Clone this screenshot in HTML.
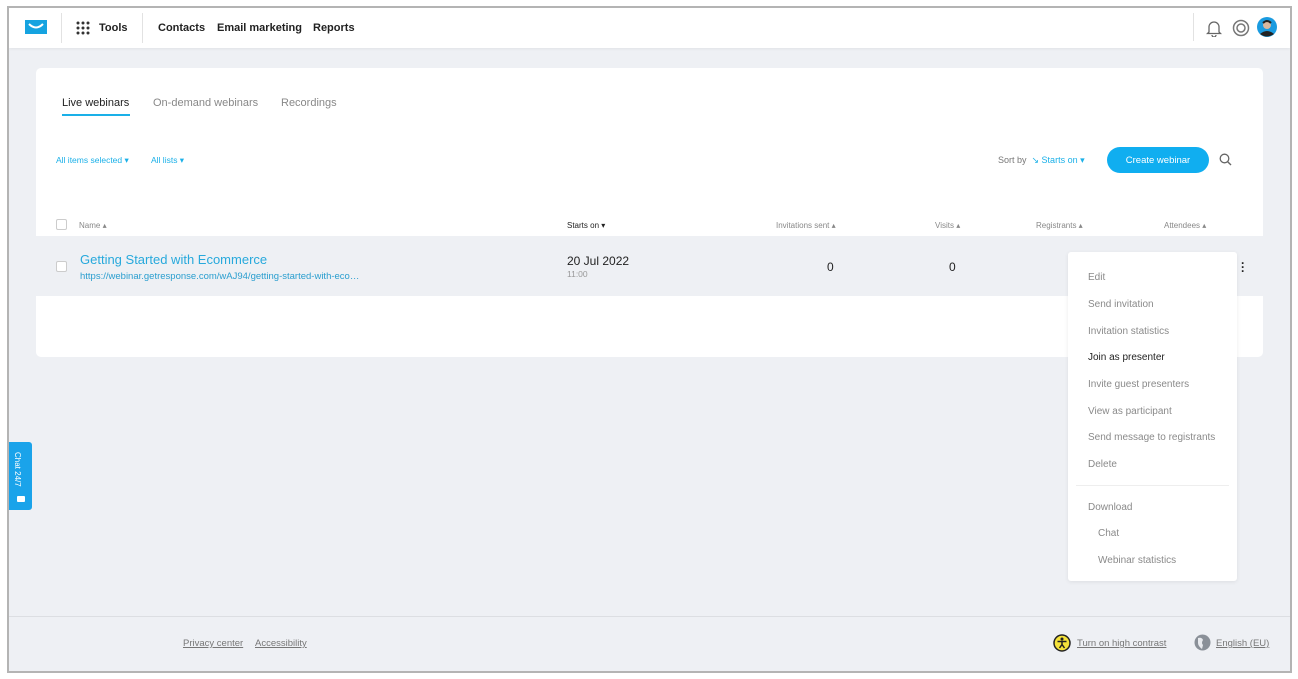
<!DOCTYPE html>
<html><head><meta charset="utf-8"><style>
*{margin:0;padding:0;box-sizing:border-box}
body{width:1298px;height:679px;background:#fff;font-family:"Liberation Sans",sans-serif;position:relative;overflow:hidden}
.frame{position:absolute;left:7px;top:6px;width:1285px;height:667px;border:2px solid #b4b4b4;background:#eef0f4;overflow:hidden}
.a{position:absolute;white-space:nowrap}
.hdr{position:absolute;left:0;top:0;width:100%;height:40px;background:#fff;box-shadow:0 1px 3px rgba(0,0,0,.06)}
.nav{font-size:11px;font-weight:bold;color:#222}
.card{position:absolute;left:27px;top:60px;width:1227px;height:289px;background:#fff;border-radius:5px}
.th{font-size:8px;color:#888}
.mi{font-size:10px;color:#8a8a8a;position:absolute;left:20px}
.blue{color:#1ab0e8}
</style></head><body>
<div class="frame">
 <div class="hdr">
  <svg class="a" style="left:16px;top:12px" width="22" height="14" viewBox="0 0 22 14"><rect width="22" height="14" fill="#15a3e0"/><path d="M4 4 Q11 11 18 4" stroke="#fff" stroke-width="2" fill="none"/></svg>
  <div class="a" style="left:52px;top:5px;width:1px;height:30px;background:#e2e2e2"></div>
  <svg class="a" style="left:67px;top:13px" width="14" height="14"><g fill="#333"><circle cx="2" cy="2" r="1.5"/><circle cx="7" cy="2" r="1.5"/><circle cx="12" cy="2" r="1.5"/><circle cx="2" cy="7" r="1.5"/><circle cx="7" cy="7" r="1.5"/><circle cx="12" cy="7" r="1.5"/><circle cx="2" cy="12" r="1.5"/><circle cx="7" cy="12" r="1.5"/><circle cx="12" cy="12" r="1.5"/></g></svg>
  <div class="a nav" style="left:90px;top:14px">Tools</div>
  <div class="a" style="left:133px;top:5px;width:1px;height:30px;background:#e2e2e2"></div>
  <div class="a nav" style="left:149px;top:14px">Contacts</div>
  <div class="a nav" style="left:208px;top:14px">Email marketing</div>
  <div class="a nav" style="left:304px;top:14px">Reports</div>
  <div class="a" style="left:1184px;top:5px;width:1px;height:28px;background:#e2e2e2"></div>
  <svg class="a" style="left:1197px;top:11px" width="16" height="18" viewBox="0 0 16 18"><path d="M3 13 V8 a5 5 0 0 1 10 0 V13 L14.5 14.5 H1.5Z M6 16 a2 2 0 0 0 4 0" stroke="#666" stroke-width="1.3" fill="none"/></svg>
  <svg class="a" style="left:1223px;top:11px" width="18" height="18"><circle cx="9" cy="9" r="7.5" stroke="#777" stroke-width="1.5" fill="none"/><circle cx="9" cy="9" r="4" stroke="#777" stroke-width="1.5" fill="none"/></svg>
  <svg class="a" style="left:1248px;top:9px" width="20" height="20"><circle cx="10" cy="10" r="10" fill="#1a9be0"/><circle cx="10" cy="8" r="4" fill="#d9b8a0"/><path d="M3 17 Q10 11 17 17 Q10 22 3 17Z" fill="#222"/><path d="M6 6 Q10 2 14 6" stroke="#222" stroke-width="2" fill="none"/></svg>
 </div>
 <div class="card">
  <div class="a" style="left:26px;top:29px;font-size:11px;color:#222">Live webinars</div>
  <div class="a" style="left:26px;top:46px;width:68px;height:2px;background:#1ab0e8"></div>
  <div class="a" style="left:117px;top:29px;font-size:11px;color:#888">On-demand webinars</div>
  <div class="a" style="left:245px;top:29px;font-size:11px;color:#888">Recordings</div>
  <div class="a blue" style="left:20px;top:87px;font-size:8.5px">All items selected ▾</div>
  <div class="a blue" style="left:115px;top:87px;font-size:8.5px">All lists ▾</div>
  <div class="a" style="left:962px;top:87px;font-size:9px;color:#777">Sort by <span class="blue">&nbsp;↘ Starts on ▾</span></div>
  <div class="a" style="left:1071px;top:79px;width:102px;height:26px;border-radius:13px;background:#10aef0;color:#fff;font-size:9.5px;text-align:center;line-height:28px">Create webinar</div>
  <svg class="a" style="left:1183px;top:85px" width="13" height="13"><circle cx="5.5" cy="5.5" r="4.3" stroke="#666" stroke-width="1.3" fill="none"/><path d="M8.7 8.7 L12 12" stroke="#666" stroke-width="1.4"/></svg>
  <div class="a" style="left:20px;top:151px;width:11px;height:11px;border:1px solid #ccc;border-radius:2px;background:#fff"></div>
  <div class="a th" style="left:43px;top:153px">Name ▴</div>
  <div class="a th" style="left:531px;top:153px;color:#222">Starts on ▾</div>
  <div class="a th" style="left:740px;top:153px">Invitations sent ▴</div>
  <div class="a th" style="left:899px;top:153px">Visits ▴</div>
  <div class="a th" style="left:1000px;top:153px">Registrants ▴</div>
  <div class="a th" style="left:1128px;top:153px">Attendees ▴</div>
  <div class="a" style="left:0;top:168px;width:1227px;height:60px;background:#eef0f4"></div>
  <div class="a" style="left:20px;top:193px;width:11px;height:11px;border:1px solid #ccc;border-radius:2px;background:#fff"></div>
  <div class="a blue" style="left:44px;top:184px;font-size:13px;color:#27a9dc">Getting Started with Ecommerce</div>
  <div class="a blue" style="left:44px;top:203px;font-size:9.5px;color:#2a9ecf">https://webinar.getresponse.com/wAJ94/getting-started-with-eco…</div>
  <div class="a" style="left:531px;top:186px;font-size:12px;color:#222">20 Jul 2022</div>
  <div class="a" style="left:531px;top:201px;font-size:8.5px;color:#999">11:00</div>
  <div class="a" style="left:791px;top:192px;font-size:12px;color:#222">0</div>
  <div class="a" style="left:913px;top:192px;font-size:12px;color:#222">0</div>
  <div class="a" style="left:1205px;top:193px;font-size:12px;font-weight:bold;line-height:4px;color:#222">·<br>·<br>·</div>
 </div>
 <div class="a" style="left:1059px;top:244px;width:169px;height:329px;background:#fff;border-radius:3px;box-shadow:0 1px 4px rgba(0,0,0,.08)">
  <div class="mi" style="top:20px">Edit</div>
  <div class="mi" style="top:47px">Send invitation</div>
  <div class="mi" style="top:74px">Invitation statistics</div>
  <div class="mi" style="top:100px;color:#222">Join as presenter</div>
  <div class="mi" style="top:127px">Invite guest presenters</div>
  <div class="mi" style="top:154px">View as participant</div>
  <div class="mi" style="top:180px">Send message to registrants</div>
  <div class="mi" style="top:207px">Delete</div>
  <div class="a" style="left:8px;top:233px;width:153px;height:1px;background:#eee"></div>
  <div class="mi" style="top:250px">Download</div>
  <div class="mi" style="top:276px;left:30px">Chat</div>
  <div class="mi" style="top:303px;left:30px">Webinar statistics</div>
 </div>
 <div class="a" style="left:0;top:434px;width:23px;height:68px;background:#1aa3ea;border-radius:0 3px 3px 0"></div>
 <div class="a" style="left:4px;top:444px;font-size:8px;color:#fff;writing-mode:vertical-rl">Chat 24/7</div>
 <div class="a" style="left:8px;top:488px;width:8px;height:6px;background:#fff;border-radius:1px"></div>
 <div class="a" style="left:0;top:608px;width:100%;height:1px;background:#dcdee2"></div>
 <div class="a" style="left:174px;top:630px;font-size:9.5px;color:#777;text-decoration:underline">Privacy center</div>
 <div class="a" style="left:246px;top:630px;font-size:9.5px;color:#777;text-decoration:underline">Accessibility</div>
 <svg class="a" style="left:1044px;top:626px" width="18" height="18"><circle cx="9" cy="9" r="8" fill="#f5e23a" stroke="#222" stroke-width="1.5"/><circle cx="9" cy="5" r="1.5" fill="#222"/><path d="M4.5 7.5 H13.5 M9 7.5 V10.5 L6.5 14 M9 10.5 L11.5 14" stroke="#222" stroke-width="1.5" fill="none"/></svg>
 <div class="a" style="left:1068px;top:630px;font-size:9.5px;color:#777;text-decoration:underline">Turn on high contrast</div>
 <svg class="a" style="left:1185px;top:626px" width="17" height="17"><circle cx="8.5" cy="8.5" r="8" fill="#8a9098"/><path d="M4 4 Q8 3 9 6 Q7 9 9 11 L8 15 Q4 12 4 9Z" fill="#e8eaee"/></svg>
 <div class="a" style="left:1207px;top:630px;font-size:9.5px;color:#777;text-decoration:underline">English (EU)</div>
</div>
</body></html>
